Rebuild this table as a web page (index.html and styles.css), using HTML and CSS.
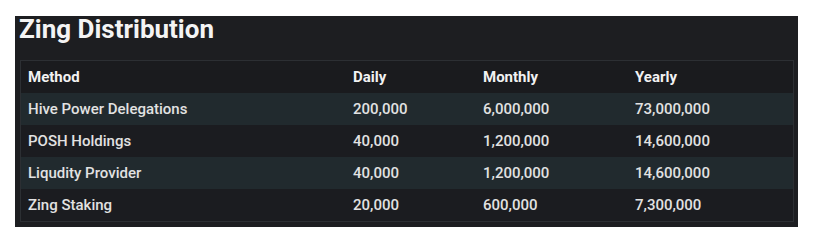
FILE: index.html
```html
<!DOCTYPE html>
<html lang="en">
<head>
    <meta charset="UTF-8">
    <meta name="viewport" content="width=device-width, initial-scale=1.0">
    <title>Zing Distribution</title>
    <link rel="stylesheet" href="styles.css">
</head>
<body>

    <div class="panel">
        <h1 class="panel-title">Zing Distribution</h1>

        <table class="dist-table">
            <thead>
                <tr>
                    <th class="col-method">Method</th>
                    <th class="col-daily">Daily</th>
                    <th class="col-monthly">Monthly</th>
                    <th class="col-yearly">Yearly</th>
                </tr>
            </thead>
            <tbody>
                <tr>
                    <td>Hive Power Delegations</td>
                    <td>200,000</td>
                    <td>6,000,000</td>
                    <td>73,000,000</td>
                </tr>
                <tr>
                    <td>POSH Holdings</td>
                    <td>40,000</td>
                    <td>1,200,000</td>
                    <td>14,600,000</td>
                </tr>
                <tr>
                    <td>Liqudity Provider</td>
                    <td>40,000</td>
                    <td>1,200,000</td>
                    <td>14,600,000</td>
                </tr>
                <tr>
                    <td>Zing Staking</td>
                    <td>20,000</td>
                    <td>600,000</td>
                    <td>7,300,000</td>
                </tr>
            </tbody>
        </table>
    </div>

</body>
</html>
```

FILE: styles.css
```css
body {
    margin: 0;
    padding: 16px 0 0 15px;
    background-color: #ffffff;
    font-family: Roboto, "Liberation Sans", sans-serif;
}

.panel {
    width: 773px;
    height: 211px;
    padding: 0 5px;
    background-color: #1d1e21;
    box-sizing: content-box;
}

.panel-title {
    margin: 0 0 18px -1px;
    font-size: 26px;
    line-height: 26px;
    font-weight: 700;
    color: #f4f4f4;
}

.dist-table {
    width: 774px;
    border-collapse: collapse;
    border: 1px solid #2c2f33;
    table-layout: fixed;
}

.dist-table th,
.dist-table td {
    height: 32px;
    padding: 0 8px 0 7px;
    text-align: left;
    font-size: 15px;
    color: #e2e2e2;
    white-space: nowrap;
}

.dist-table th {
    font-weight: 700;
    color: #f2f2f2;
    background-color: #1a1b1e;
}

.dist-table td {
    font-weight: 500;
}

/* widths are content widths, padding comes on top */
.col-method { width: 310px; }
.col-daily { width: 115px; }
.col-monthly { width: 137px; }

.dist-table tbody tr:nth-child(odd) {
    background-color: #212a2e;
}

.dist-table tbody tr:nth-child(even) {
    background-color: #1b1c20;
}
```
